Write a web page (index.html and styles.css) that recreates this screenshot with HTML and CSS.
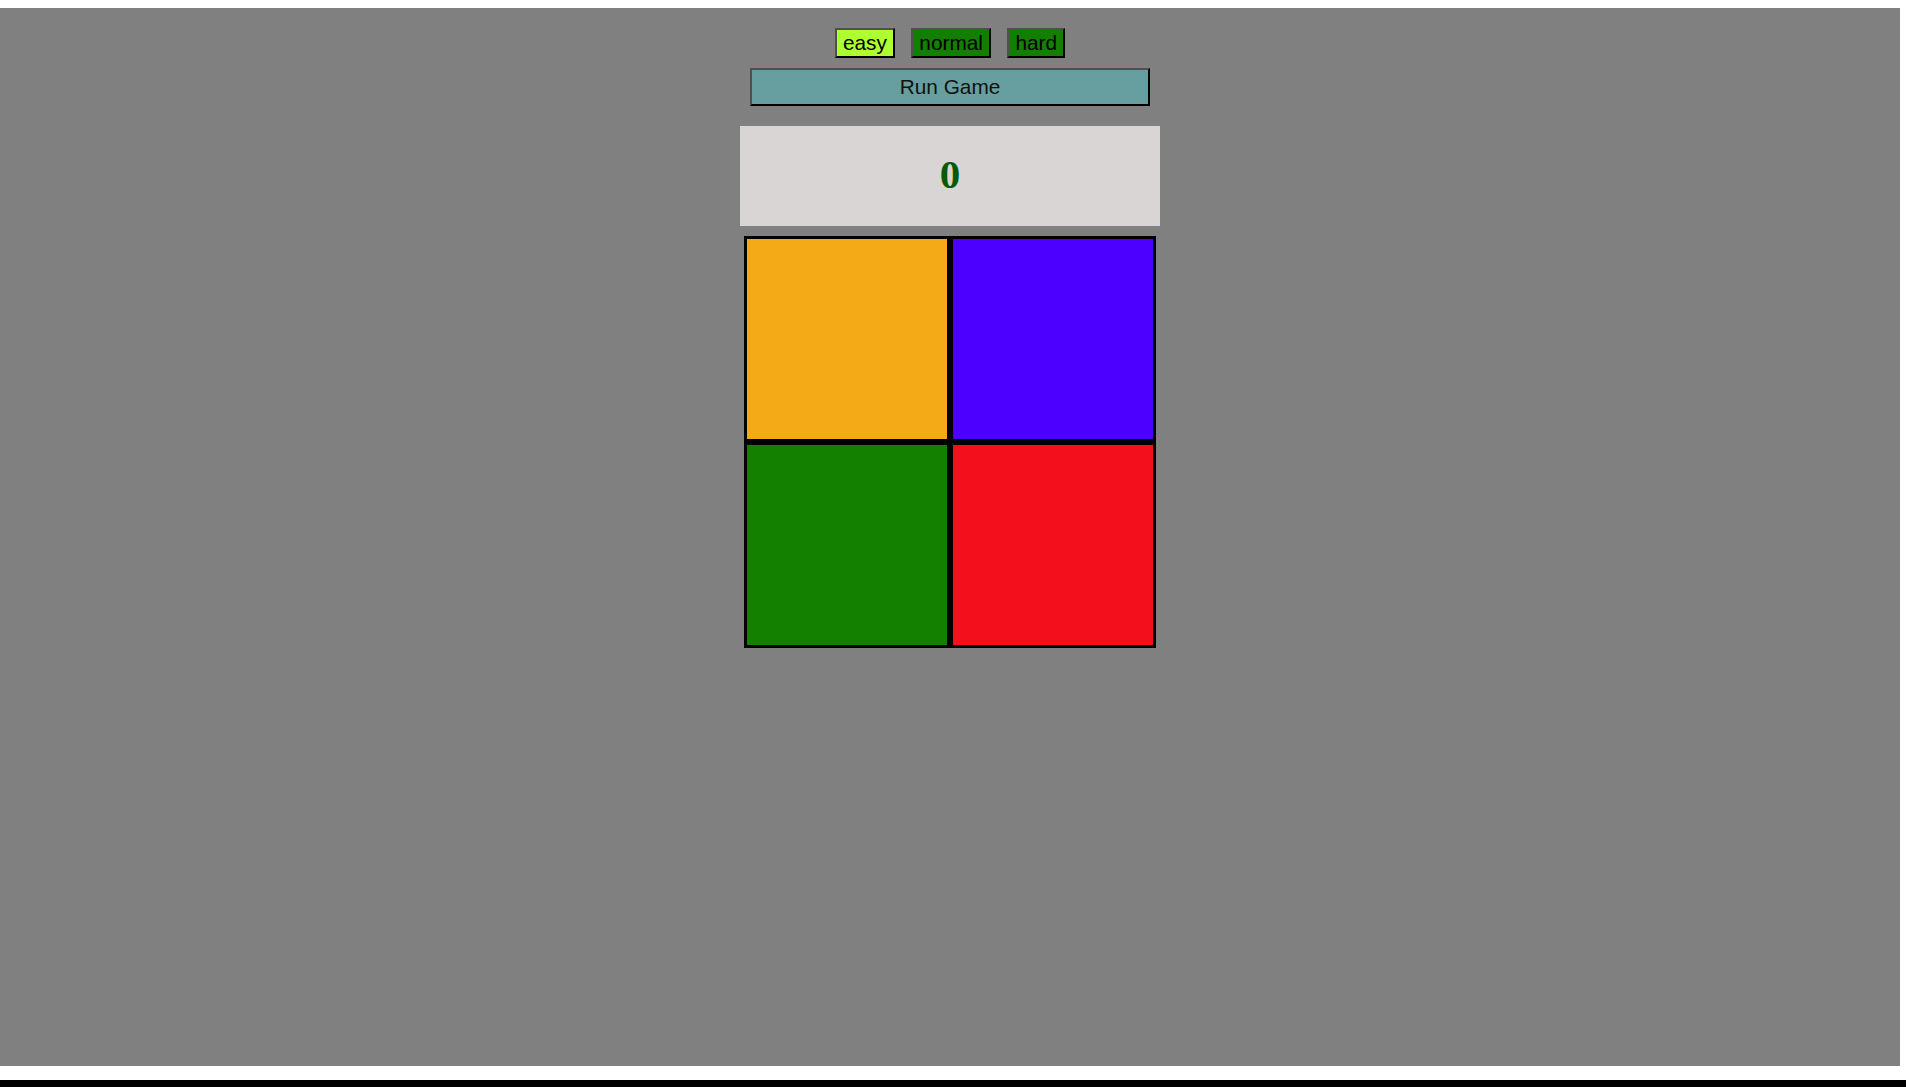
FILE: index.html
```html
<!DOCTYPE html>
<html>
<head>
<meta charset="utf-8">
<title>Simon</title>
<link rel="stylesheet" href="styles.css">
</head>
<body>
<main class="stage">
  <div class="levels">
    <button class="level level-easy">easy</button>
    <button class="level level-other">normal</button>
    <button class="level level-other">hard</button>
  </div>
  <button class="run">Run Game</button>
  <div class="score">0</div>
  <div class="board">
    <div class="pad pad-orange"></div>
    <div class="pad pad-purple"></div>
    <div class="pad pad-green"></div>
    <div class="pad pad-red"></div>
  </div>
</main>
<div class="bottom-bar"></div>
</body>
</html>
```
FILE: styles.css
```css
html, body {
  margin: 0;
  padding: 0;
  background: #ffffff;
  overflow: hidden;
}
body {
  padding-top: 8px;
  font-family: "Liberation Sans", Arial, sans-serif;
}
.stage {
  width: 1900px;
  height: 1058px;
  background: #808080;
  display: flex;
  flex-direction: column;
  align-items: center;
  padding-top: 20px;
  box-sizing: border-box;
}
.levels {
  display: flex;
  gap: 16.5px;
}
.level {
  font-family: "Liberation Sans", Arial, sans-serif;
  font-size: 20.8px;
  line-height: 24px;
  padding: 1px 6px;
  border: 2px solid;
  border-color: #4f4f4f #000 #000 #4f4f4f;
  color: #000;
  margin: 0;
}
.level-easy {
  background: #adff2f;
}
.level-other {
  background: #137f00;
}
.run {
  margin-top: 10px;
  width: 400px;
  height: 38px;
  font-family: "Liberation Sans", Arial, sans-serif;
  font-size: 20.8px;
  line-height: 24px;
  padding: 0;
  border: 2px solid;
  border-color: #4f4f4f #000 #000 #4f4f4f;
  background: #679e9f;
  color: #111;
}
.score {
  margin-top: 20px;
  width: 420px;
  height: 100px;
  box-sizing: border-box;
  padding-bottom: 4px;
  background: #d9d5d4;
  display: flex;
  align-items: center;
  justify-content: center;
  font-family: "Liberation Serif", "Times New Roman", serif;
  font-weight: bold;
  font-size: 41px;
  color: #075a07;
}
.board {
  margin-top: 10px;
  display: grid;
  grid-template-columns: 206px 206px;
  grid-template-rows: 206px 206px;
}
.pad {
  border: 3px solid #000;
}
.pad-orange { background: #f4aa16; }
.pad-purple { background: #4c00ff; }
.pad-green { background: #138000; }
.pad-red { background: #f40f1c; }
.bottom-bar {
  margin-top: 14px;
  height: 30px;
  background: #000;
}
```
